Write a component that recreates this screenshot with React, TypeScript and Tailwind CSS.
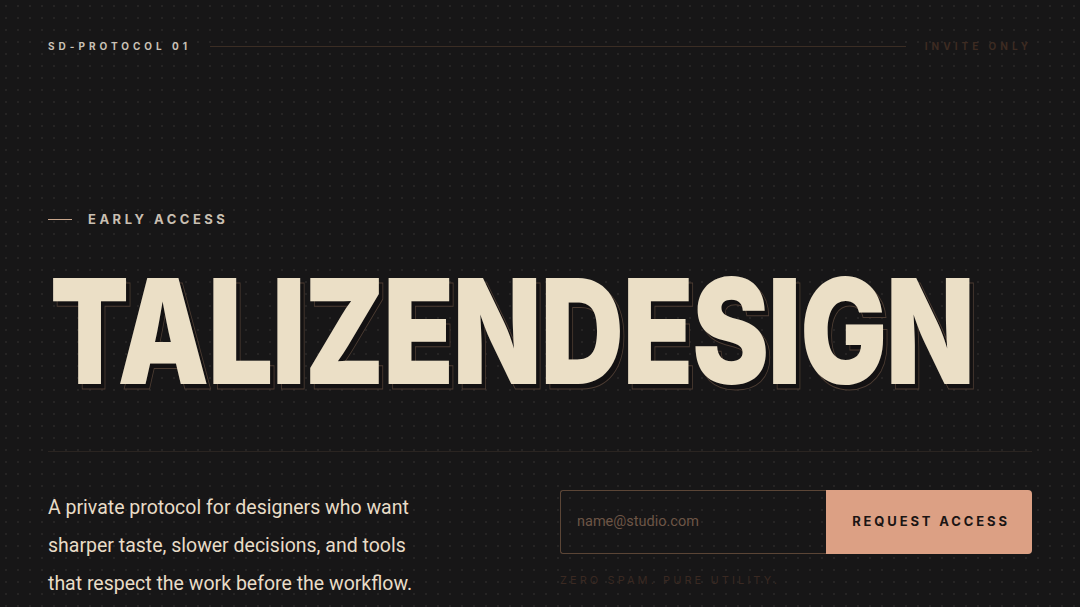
import React from 'react';

const HEADLINE = 'TALIZENDESIGN';

const App: React.FC = () => {
  return (
    <div
      className="w-[1080px] h-[607px] overflow-hidden bg-[#171617] text-[#e9dec8] px-12 flex flex-col"
      style={{
        backgroundImage: 'radial-gradient(circle, #262424 1px, transparent 1.2px)',
        backgroundSize: '12px 12px',
        fontFamily: 'Inter, "Noto Sans", sans-serif',
      }}
    >
      {/* top bar */}
      <div className="flex items-center gap-[19px] pt-[40px] h-[52px]">
        <span className="text-[10px] font-bold tracking-[0.4em] text-[#c9c1b6] whitespace-nowrap">SD-PROTOCOL 01</span>
        <div className="flex-1 h-px bg-[#3b2d24]" />
        <span className="text-[10px] font-bold tracking-[0.4em] text-[#3d2b22] whitespace-nowrap">INVITE ONLY</span>
      </div>

      {/* eyebrow */}
      <div className="flex items-center gap-4 mt-[158px]">
        <div className="w-6 h-px bg-[#c9a68c]" />
        <span className="text-[13px] font-bold tracking-[0.27em] text-[#c9bfb2]">EARLY ACCESS</span>
      </div>

      {/* headline */}
      <div className="relative mt-[28px] h-[140px]">
        <h1
          className="absolute left-[6px] top-[5px] origin-left scale-x-[0.79] text-[146px] leading-none font-black tracking-[-0.01em] text-[#131112] whitespace-nowrap select-none"
          style={{ WebkitTextStroke: '1px #4d3d33' }}
          aria-hidden
        >
          {HEADLINE}
        </h1>
        <h1 className="relative left-[2px] origin-left scale-x-[0.79] text-[146px] leading-none font-black tracking-[-0.01em] text-[#ebdfc6] whitespace-nowrap">
          {HEADLINE}
        </h1>
      </div>

      <div className="h-px bg-[#2a2421] mt-[53px]" />

      {/* bottom */}
      <div className="flex justify-between mt-[38px]">
        <p
          className="text-[19.5px] leading-[38px] text-[#e8dcc7] w-[380px] -mt-[1px]"
          style={{ fontFamily: 'Roboto, "Noto Sans", sans-serif' }}
        >
          A private protocol for designers who want sharper taste, slower decisions, and tools that respect the work before the workflow.
        </p>
        <div className="w-[472px] flex flex-col">
          <div className="flex h-16">
            <div className="flex-1 flex items-center border border-[#5b4536] border-r-0 rounded-l-[3px] px-4">
              <span className="text-[14.5px] text-[#6d5546]" style={{ fontFamily: 'Roboto, sans-serif' }}>name@studio.com</span>
            </div>
            <button className="w-[206px] bg-[#dca084] rounded-r-[4px] text-[13px] font-bold tracking-[0.22em] text-[#1b1514] pl-1">
              REQUEST ACCESS
            </button>
          </div>
          <span className="mt-[18px] text-[11px] tracking-[0.28em] text-[#3a2922]">ZERO SPAM. PURE UTILITY.</span>
        </div>
      </div>
    </div>
  );
};

export default App;
